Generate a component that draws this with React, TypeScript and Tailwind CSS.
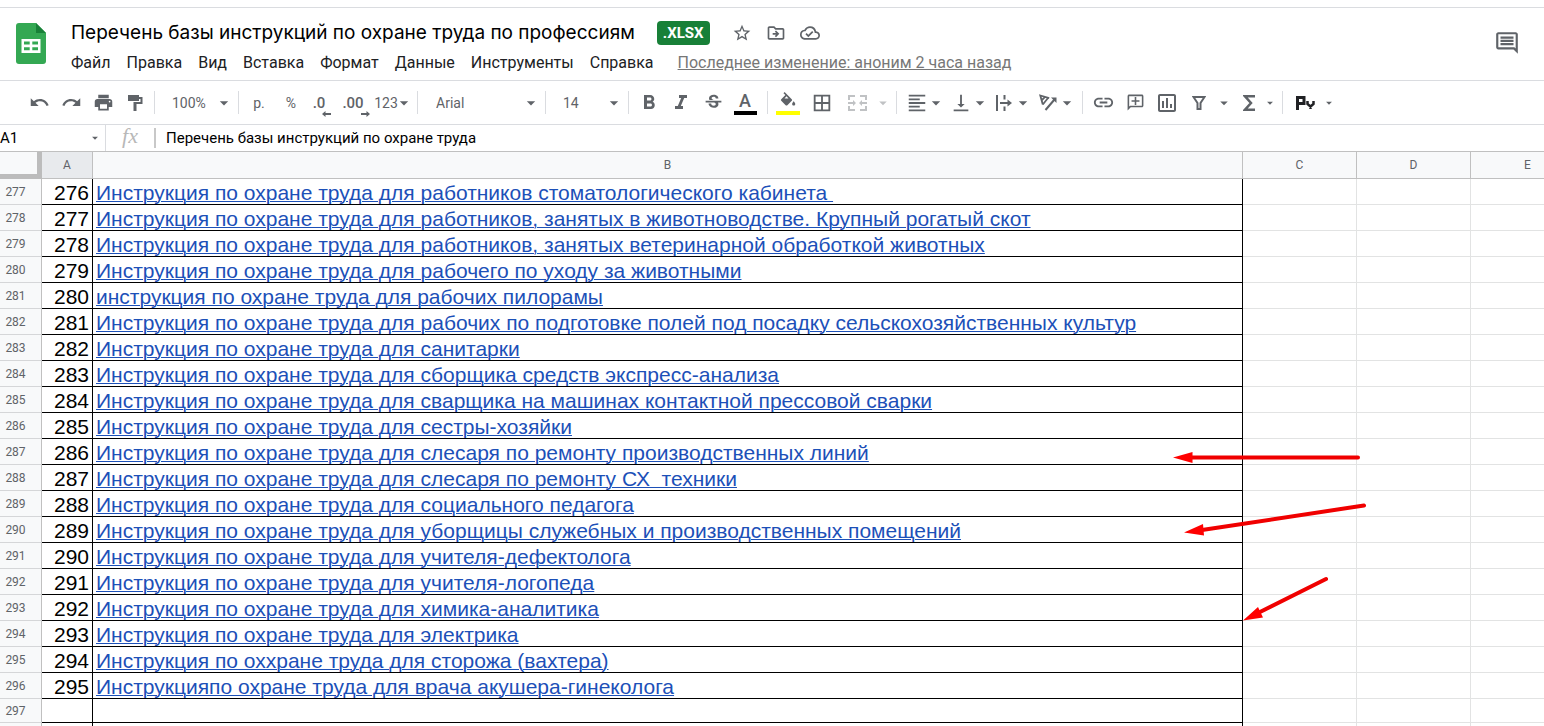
import type { ReactNode } from 'react';
import {
  MdUndo,
  MdRedo,
  MdPrint,
  MdFormatBold,
  MdFormatItalic,
  MdStrikethroughS,
  MdBorderAll,
  MdFormatAlignLeft,
  MdVerticalAlignBottom,
  MdLink,
  MdOutlineInsertChart,
  MdArrowDropDown,
  MdStarBorder,
  MdOutlineDriveFileMove,
  MdOutlineCloudDone,
  MdOutlineComment,
  MdOutlineAddComment,
} from 'react-icons/md';

const MENU = ['Файл', 'Правка', 'Вид', 'Вставка', 'Формат', 'Данные', 'Инструменты', 'Справка'];

const COLUMNS = ['A', 'B', 'C', 'D', 'E'];

const FIRST_ROW = 277;

const ROWS = [
  'Инструкция по охране труда для работников стоматологического кабинета ',
  'Инструкция по охране труда для работников, занятых в животноводстве. Крупный рогатый скот',
  'Инструкция по охране труда для работников, занятых ветеринарной обработкой животных',
  'Инструкция по охране труда для рабочего по уходу за животными',
  'инструкция по охране труда для рабочих пилорамы',
  'Инструкция по охране труда для рабочих по подготовке полей под посадку сельскохозяйственных культур',
  'Инструкция по охране труда для санитарки',
  'Инструкция по охране труда для сборщика средств экспресс-анализа',
  'Инструкция по охране труда для сварщика на машинах контактной прессовой сварки',
  'Инструкция по охране труда для сестры-хозяйки',
  'Инструкция по охране труда для слесаря по ремонту производственных линий',
  'Инструкция по охране труда для слесаря по ремонту СХ  техники',
  'Инструкция по охране труда для социального педагога',
  'Инструкция по охране труда для уборщицы служебных и производственных помещений',
  'Инструкция по охране труда для учителя-дефектолога',
  'Инструкция по охране труда для учителя-логопеда',
  'Инструкция по охране труда для химика-аналитика',
  'Инструкция по охране труда для электрика',
  'Инструкция по оххране труда для сторожа (вахтера)',
  'Инструкцияпо охране труда для врача акушера-гинеколога',
];

function Separator() {
  return <div className="h-[23px] w-px shrink-0 bg-[#dadce0]" />;
}

function ToolButton({ label, className = 'w-8', children }: { label: string; className?: string; children: ReactNode }) {
  return (
    <button aria-label={label} title={label} className={`flex h-8 shrink-0 items-center justify-center ${className}`}>
      {children}
    </button>
  );
}

function ToolSelect({ label, value, className, textClass }: { label: string; value: string; className: string; textClass: string }) {
  return (
    <div className={`relative flex h-8 shrink-0 items-center ${className}`}>
      <select aria-label={label} defaultValue={value} className={`h-full w-full appearance-none bg-transparent text-sm outline-none ${textClass}`}>
        <option>{value}</option>
      </select>
      <MdArrowDropDown size={20} className="pointer-events-none absolute right-1" />
    </div>
  );
}

function SheetsLogo() {
  return (
    <svg viewBox="0 0 30 41" className="h-[41px] w-[30px]">
      <path d="M3 0h17l10 10v28a3 3 0 0 1-3 3H3a3 3 0 0 1-3-3V3a3 3 0 0 1 3-3z" fill="#34a853" />
      <path d="M20 0l10 10H20z" fill="#188038" />
      <path d="M5.500 16h19v14h-19zM8 18.500v3h5.700v-3zM16.300 18.500v3H22v-3zM8 24.200v3h5.700v-3zM16.300 24.200v3H22v-3z" fill="#fff" fillRule="evenodd" />
    </svg>
  );
}

function DecimalIcon({ text, direction }: { text: string; direction: 'left' | 'right' }) {
  return (
    <span className="relative text-[15px] font-medium leading-5">
      {text}
      <svg viewBox="0 0 9 6" className="absolute -bottom-1 -right-1.5 h-1.5 w-[9px]" fill="currentColor">
        {direction === 'left' ? <path d="M0 3l3.500-3v2H9v2H3.500v2z" /> : <path d="M9 3L5.500 0v2H0v2h5.500v2z" />}
      </svg>
    </span>
  );
}

function PaintIcon() {
  return (
    <svg viewBox="0 0 16 18" className="h-[18px] w-4" fill="currentColor">
      <path d="M1 1h11v2h3.500v7H9.500v7h-3V8h7V5H12v2H1z" />
    </svg>
  );
}

function FillIcon() {
  return (
    <svg viewBox="0 0 24 24" className="h-6 w-6">
      <path
        d="M16.560 8.940L7.620 0 6.210 1.410l2.380 2.380-5.150 5.150a1.490 1.490 0 0 0 0 2.120l5.500 5.500c.29.29.68.44 1.060.44s.77-.15 1.060-.44l5.500-5.500c.59-.58.59-1.530 0-2.120zM7.500 8L10 5.210 12.500 8zM19 11.500s-2 2.170-2 3.500c0 1.100.9 2 2 2s2-.9 2-2c0-1.330-2-3.500-2-3.500z"
        fill="currentColor"
        transform="translate(2.500 1) scale(.8)"
      />
      <path d="M0 20h24v4H0z" fill="#ff0" />
    </svg>
  );
}

function MergeIcon() {
  return (
    <svg viewBox="0 0 19 16" className="h-4 w-[19px]" fill="none" stroke="currentColor" strokeWidth="2">
      <path d="M1 5V1h6M12 1h6v4M1 11v4h6M12 15h6v-4M0 8h6M19 8h-6" />
      <path d="M5 5l3 3-3 3zM14 5l-3 3 3 3z" fill="currentColor" stroke="none" />
    </svg>
  );
}

function WrapIcon() {
  return (
    <svg viewBox="0 0 16 16" className="h-4 w-4" fill="none" stroke="currentColor" strokeWidth="2">
      <path d="M1 0v16M8.500 0v4.500M8.500 11.500V16M4 8h9" />
      <path d="M11.500 4.500L16 8l-4.500 3.500z" fill="currentColor" stroke="none" />
    </svg>
  );
}

function RotateIcon() {
  return (
    <svg viewBox="0 0 18 17" className="h-[17px] w-[18px]" fill="none" stroke="currentColor" strokeWidth="1.800">
      <path d="M3.800 10.500L1.300 1.500l8.900 2.700M2.500 6.500l3.800-3.800M1.300 1.500" />
      <path d="M3.800 10.500l5.200-6.500" />
      <path d="M6.500 16L15.500 5.500" strokeWidth="2" />
      <path d="M12 3.500h5.500V9z" fill="currentColor" stroke="none" />
    </svg>
  );
}

function FilterIcon() {
  return (
    <svg viewBox="0 0 14 14" className="h-3.5 w-3.5" fill="none" stroke="currentColor" strokeWidth="2">
      <path d="M1.500 1h11L8.500 7v6h-3V7z" />
    </svg>
  );
}

function SumIcon() {
  return (
    <svg viewBox="0 0 12 16" className="h-4 w-3" fill="none" stroke="currentColor" strokeWidth="2.500">
      <path d="M12 1.300H2L8 8l-6 6.700h10" />
    </svg>
  );
}

function InputToolIcon() {
  return (
    <svg viewBox="0 0 19 14" className="h-3.5 w-[19px]" fill="none" stroke="#202124" strokeWidth="3">
      <path d="M1.500 14V1.500H8v6H1.500" />
      <path d="M11.500 5v3l3 2.500 3-2.500V5M14.500 10v3" strokeWidth="2.500" />
    </svg>
  );
}

function SmallArrow() {
  return <MdArrowDropDown size={14} />;
}

function Arrows() {
  return (
    <svg viewBox="0 0 194 172" className="pointer-events-none absolute right-[178px] top-[299px] h-[172px] w-[194px]" stroke="#f00000" strokeWidth="4" strokeLinecap="round">
      <path d="M19 6.500h167M30 79L192 54.500M87 161.500l67-33.500" />
      <path d="M1 6.500L20.500 1v11zM12 81.500L31 73l1 11.500zM71 169.500L86 156l5 10.500z" fill="#f00" stroke="none" />
    </svg>
  );
}

function Header() {
  return (
    <header className="mt-[7px] flex h-[74px] items-start border-y border-[#dadce0] pl-4">
      <a href="#home" aria-label="Таблицы" className="mt-[15px] shrink-0">
        <SheetsLogo />
      </a>
      <div className="ml-[25px] min-w-0 flex-1 pt-2.5">
        <div className="flex h-[30px] items-center whitespace-nowrap">
          <h1 className="font-['Inter','Noto_Sans',sans-serif] text-[19px] leading-6 text-black">Перечень базы инструкций по охране труда по профессиям</h1>
          <span className="ml-[22px] flex h-6 items-center rounded bg-[#188038] px-1.5 text-[15px] font-bold text-white">.XLSX</span>
          <div className="ml-[19px] flex gap-2 text-[#5f6368]">
            <button aria-label="Пометить" className="flex w-[26px] justify-center">
              <MdStarBorder size={20} />
            </button>
            <button aria-label="Переместить" className="flex w-[26px] justify-center">
              <MdOutlineDriveFileMove size={20} />
            </button>
            <button aria-label="Статус документа" className="flex w-[26px] justify-center">
              <MdOutlineCloudDone size={20} />
            </button>
          </div>
        </div>
        <nav className="flex h-[30px] items-center gap-4 whitespace-nowrap text-base text-[#202124]">
          {MENU.map((item) => (
            <button key={item}>{item}</button>
          ))}
          <a href="#history" className="ml-2 text-[#777] underline">
            Последнее изменение: аноним 2 часа назад
          </a>
        </nav>
      </div>
      <button aria-label="Комментарии" className="mr-6 mt-[22px] text-[#5f6368]">
        <MdOutlineComment size={26} />
      </button>
    </header>
  );
}

function Toolbar() {
  return (
    <div role="toolbar" className="flex h-11 items-center overflow-hidden border-b border-[#dadce0] pl-[23px] text-sm text-[#5f6368]">
      <ToolButton label="Отменить"><MdUndo size={21} /></ToolButton>
      <ToolButton label="Повторить"><MdRedo size={21} /></ToolButton>
      <ToolButton label="Печать"><MdPrint size={21} /></ToolButton>
      <ToolButton label="Копировать форматирование" className="mr-[3px] w-8"><PaintIcon /></ToolButton>
      <Separator />
      <ToolSelect label="Масштаб" value="100%" className="w-[83px]" textClass="pl-[17px]" />
      <Separator />
      <ToolButton label="Денежный формат" className="ml-1 w-8">р.</ToolButton>
      <ToolButton label="Процентный формат">%</ToolButton>
      <ToolButton label="Уменьшить число знаков" className="w-6"><DecimalIcon text=".0" direction="left" /></ToolButton>
      <ToolButton label="Увеличить число знаков" className="ml-1 w-9"><DecimalIcon text=".00" direction="right" /></ToolButton>
      <ToolButton label="Другие форматы" className="mr-1 w-[42px]">
        <span>123</span>
        <MdArrowDropDown size={20} className="-mx-1" />
      </ToolButton>
      <Separator />
      <ToolSelect label="Шрифт" value="Arial" className="w-[127px]" textClass="pl-[18px]" />
      <Separator />
      <ToolSelect label="Размер шрифта" value="14" className="w-[82px]" textClass="pl-[17px]" />
      <Separator />
      <ToolButton label="Полужирный" className="ml-1 w-8"><MdFormatBold size={24} /></ToolButton>
      <ToolButton label="Курсив"><MdFormatItalic size={24} /></ToolButton>
      <ToolButton label="Зачеркнутый"><MdStrikethroughS size={21} /></ToolButton>
      <ToolButton label="Цвет текста" className="mr-1.5 w-8 flex-col">
        <span className="text-lg font-medium leading-5">A</span>
        <span className="h-1 w-[23px] bg-black" />
      </ToolButton>
      <Separator />
      <ToolButton label="Цвет заливки" className="ml-1 w-8"><FillIcon /></ToolButton>
      <ToolButton label="Границы" className="w-9"><MdBorderAll size={22} /></ToolButton>
      <ToolButton label="Объединить ячейки" className="w-[34px] text-[#c0c2c4]"><MergeIcon /></ToolButton>
      <ToolButton label="Вид объединения" className="mr-1 w-[18px] text-[#c0c2c4]"><MdArrowDropDown size={18} /></ToolButton>
      <Separator />
      <ToolButton label="Выравнивание по горизонтали" className="ml-[7px] w-11"><MdFormatAlignLeft size={22} /><MdArrowDropDown size={20} className="-ml-0.5" /></ToolButton>
      <ToolButton label="Выравнивание по вертикали" className="w-11"><MdVerticalAlignBottom size={22} /><MdArrowDropDown size={20} className="-ml-0.5" /></ToolButton>
      <ToolButton label="Перенос текста" className="w-11 gap-px"><WrapIcon /><MdArrowDropDown size={20} /></ToolButton>
      <ToolButton label="Поворот текста" className="mr-[2px] w-11"><RotateIcon /><MdArrowDropDown size={20} /></ToolButton>
      <Separator />
      <ToolButton label="Вставить ссылку" className="ml-1 w-8"><MdLink size={23} /></ToolButton>
      <ToolButton label="Вставить комментарий"><MdOutlineAddComment size={19} className="-scale-x-100" /></ToolButton>
      <ToolButton label="Вставить диаграмму"><MdOutlineInsertChart size={24} /></ToolButton>
      <ToolButton label="Фильтр"><FilterIcon /></ToolButton>
      <ToolButton label="Фильтры" className="w-[18px]"><MdArrowDropDown size={20} /></ToolButton>
      <ToolButton label="Функции"><SumIcon /></ToolButton>
      <ToolButton label="Список функций" className="mr-[7px] w-2.5"><MdArrowDropDown size={14} className="shrink-0" /></ToolButton>
      <Separator />
      <ToolButton label="Способ ввода" className="ml-2 w-7"><InputToolIcon /></ToolButton>
      <ToolButton label="Способы ввода" className="ml-[3px] w-3.5"><SmallArrow /></ToolButton>
    </div>
  );
}

function FormulaBar() {
  return (
    <div className="flex h-[26px] items-center text-[15px] text-black">
      <input aria-label="Поле имени" defaultValue="A1" className="h-6 w-[86px] outline-none" />
      <button aria-label="Именованные диапазоны" className="mr-px flex w-[18px] justify-center text-[#5f6368]">
        <SmallArrow />
      </button>
      <div className="h-full w-px bg-[#dadce0]" />
      <span className="w-12 pb-1 text-center font-['Liberation_Serif',serif] text-[22px] italic leading-6 text-[#b8b8b8]">fx</span>
      <div className="h-5 w-0.5 bg-[#c8c8c8]" />
      <input
        aria-label="Строка формул"
        defaultValue="Перечень базы инструкций по охране труда"
        className="ml-2.5 h-6 min-w-0 flex-1 outline-none"
      />
    </div>
  );
}

function Sheet() {
  return (
    <div className="relative overflow-hidden border-t border-[#c0c0c0]">
      <table className="w-[calc(100%+41px)] table-fixed border-separate border-spacing-0">
        <colgroup>
          <col className="w-[42px]" />
          <col className="w-[51px]" />
          <col />
          <col className="w-[114px]" />
          <col className="w-[114px]" />
          <col className="w-[114px]" />
        </colgroup>
        <thead>
          <tr className="h-[27px] text-xs text-[#5f6368]">
            <th className="border-b-[5px] border-r-[5px] border-[#bcbcbc] bg-[#f8f9fa] p-0" />
            {COLUMNS.map((name) => (
              <th
                key={name}
                scope="col"
                className={`border-b border-r border-[#c0c0c0] p-0 font-normal ${name === 'A' ? 'bg-[#e8eaed]' : 'bg-[#f8f9fa]'}`}
              >
                {name}
              </th>
            ))}
          </tr>
        </thead>
        <tbody>
          {ROWS.map((title, i) => (
            <tr key={title} className="h-[26px]">
              <th scope="row" className="border-b border-r border-b-[#d5d6d8] border-r-[#c0c0c0] bg-[#f8f9fa] p-0 pr-2.5 text-xs font-normal text-[#5f6368]">
                {FIRST_ROW + i}
              </th>
              <td className="border-b border-r border-black p-0 pr-[3px] pt-0.5 text-right font-['Liberation_Sans',sans-serif] text-[21px] leading-[23px] text-black">
                {FIRST_ROW - 1 + i}
              </td>
              <td className="whitespace-pre border-b border-r border-black p-0 pl-[3px] pt-0.5 font-['Liberation_Sans',sans-serif] text-[21px] leading-[23px]">
                <a href="#doc" className="text-[#1c50b8] underline decoration-1">{title}</a>
              </td>
              <td className="border-b border-r border-[#e2e3e3]" />
              <td className="border-b border-r border-[#e2e3e3]" />
              <td className="border-b border-r border-[#e2e3e3]" />
            </tr>
          ))}
          {['297', ''].map((row) => (
            <tr key={row} className="h-6">
              <th scope="row" className="border-b border-r border-b-[#d5d6d8] border-r-[#c0c0c0] bg-[#f8f9fa] p-0 pr-2.5 text-xs font-normal text-[#5f6368]">
                {row}
              </th>
              <td className="border-b border-r border-black p-0" />
              <td className="border-b border-r border-black p-0" />
              <td className="border-b border-r border-[#e2e3e3] p-0" />
              <td className="border-b border-r border-[#e2e3e3] p-0" />
              <td className="border-b border-r border-[#e2e3e3] p-0" />
            </tr>
          ))}
        </tbody>
      </table>
      <Arrows />
    </div>
  );
}

export default function App() {
  return (
    <div className="h-screen overflow-hidden bg-white font-['Roboto',sans-serif]">
      <Header />
      <Toolbar />
      <FormulaBar />
      <Sheet />
    </div>
  );
}
